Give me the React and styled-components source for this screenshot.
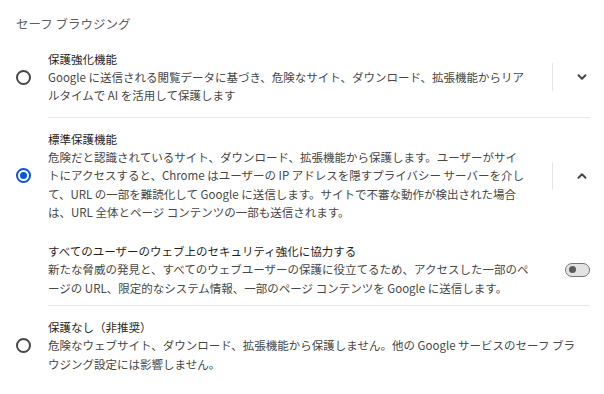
import React from 'react'
import styled, { createGlobalStyle } from 'styled-components'

const GlobalStyle = createGlobalStyle`
  html, body {
    margin: 0;
    padding: 0;
    background: #ffffff;
  }
  body {
    font-family: "Noto Sans CJK JP", "Noto Sans", sans-serif;
    -webkit-font-smoothing: antialiased;
  }
`

const Page = styled.div`
  width: 604px;
  height: 394px;
  box-sizing: border-box;
  padding: 14px 14px 0 16px;
  overflow: hidden;
`

const SectionTitle = styled.div`
  font-size: 12.5px;
  line-height: 19px;
  color: #5e5e5e;
  margin-bottom: 5px;
`

const OptionRow = styled.div`
  display: flex;
  align-items: stretch;
`

const RadioCol = styled.div`
  width: 32px;
  flex: none;
  display: flex;
  align-items: center;
`

const Radio = styled.span`
  box-sizing: border-box;
  width: 15px;
  height: 15px;
  border-radius: 50%;
  border: 2px solid ${p => (p.$checked ? '#0b57d0' : '#474747')};
  display: flex;
  align-items: center;
  justify-content: center;

  &::after {
    content: '';
    width: 7px;
    height: 7px;
    border-radius: 50%;
    background: #0b57d0;
    display: ${p => (p.$checked ? 'block' : 'none')};
  }
`

const RowBody = styled.div`
  flex: 1;
  display: flex;
  align-items: center;
  padding: 12px 0;
  border-top: ${p => (p.$divider ? '1px solid #e9e9e9' : 'none')};
`

const TextBlock = styled.div`
  flex: 1;
  padding-right: ${p => p.$pad}px;
`

const Label = styled.div`
  font-size: 11.5px;
  line-height: 18px;
  color: #1f1f1f;
`

const Sub = styled.div`
  font-size: 11.5px;
  line-height: 18.4px;
  color: #474747;
`

const ExpandAction = styled.div`
  flex: none;
  display: flex;
  align-items: center;
  width: 38px;
  height: 28px;
`

const Divider = styled.div`
  width: 1px;
  align-self: stretch;
  background: #e6e6e6;
`

const IconBox = styled.div`
  flex: 1;
  display: flex;
  justify-content: flex-end;
  align-items: center;
  color: #474747;
`

const Collapse = styled.div`
  margin-left: 32px;
  display: flex;
  align-items: center;
  padding: 9px 0 8px;
`

const Toggle = styled.span`
  box-sizing: border-box;
  flex: none;
  width: 25px;
  height: 14px;
  border-radius: 7px;
  border: 1px solid #747775;
  background: #e3e3e3;
  display: flex;
  align-items: center;
  padding-left: 3px;

  &::before {
    content: '';
    width: 7px;
    height: 7px;
    border-radius: 50%;
    background: #5c5c5c;
  }
`

const Chevron = ({ up }) => (
  <svg width="16" height="16" viewBox="0 0 16 16" fill="none">
    <path
      d={up ? 'M4.5 9.8 L8 6.3 L11.5 9.8' : 'M4.5 6.2 L8 9.7 L11.5 6.2'}
      stroke="currentColor"
      strokeWidth="2"
      strokeLinecap="round"
      strokeLinejoin="round"
    />
  </svg>
)

const options = [
  {
    label: '保護強化機能',
    sub: 'Google に送信される閲覧データに基づき、危険なサイト、ダウンロード、拡張機能からリアルタイムで AI を活用して保護します',
    expand: 'down',
  },
  {
    label: '標準保護機能',
    sub: '危険だと認識されているサイト、ダウンロード、拡張機能から保護します。ユーザーがサイトにアクセスすると、Chrome はユーザーの IP アドレスを隠すプライバシー サーバーを介して、URL の一部を難読化して Google に送信します。サイトで不審な動作が検出された場合は、URL 全体とページ コンテンツの一部も送信されます。',
    expand: 'up',
    checked: true,
    extra: {
      label: 'すべてのユーザーのウェブ上のセキュリティ強化に協力する',
      sub: '新たな脅威の発見と、すべてのウェブユーザーの保護に役立てるため、アクセスした一部のページの URL、限定的なシステム情報、一部のページ コンテンツを Google に送信します。',
    },
  },
  {
    label: '保護なし（非推奨）',
    sub: '危険なウェブサイト、ダウンロード、拡張機能から保護しません。他の Google サービスのセーフ ブラウジング設定には影響しません。',
  },
]

export default function App() {
  return (
    <Page>
      <GlobalStyle />
      <SectionTitle>セーフ ブラウジング</SectionTitle>
      {options.map((o, i) => (
        <div key={o.label}>
          <OptionRow>
            <RadioCol>
              <Radio $checked={o.checked} />
            </RadioCol>
            <RowBody $divider={i > 0}>
              <TextBlock $pad={o.expand ? 24 : 8}>
                <Label>{o.label}</Label>
                <Sub>{o.sub}</Sub>
              </TextBlock>
              {o.expand && (
                <ExpandAction>
                  <Divider />
                  <IconBox>
                    <Chevron up={o.expand === 'up'} />
                  </IconBox>
                </ExpandAction>
              )}
            </RowBody>
          </OptionRow>
          {o.extra && (
            <Collapse>
              <TextBlock $pad={30}>
                <Label>{o.extra.label}</Label>
                <Sub>{o.extra.sub}</Sub>
              </TextBlock>
              <Toggle />
            </Collapse>
          )}
        </div>
      ))}
    </Page>
  )
}
